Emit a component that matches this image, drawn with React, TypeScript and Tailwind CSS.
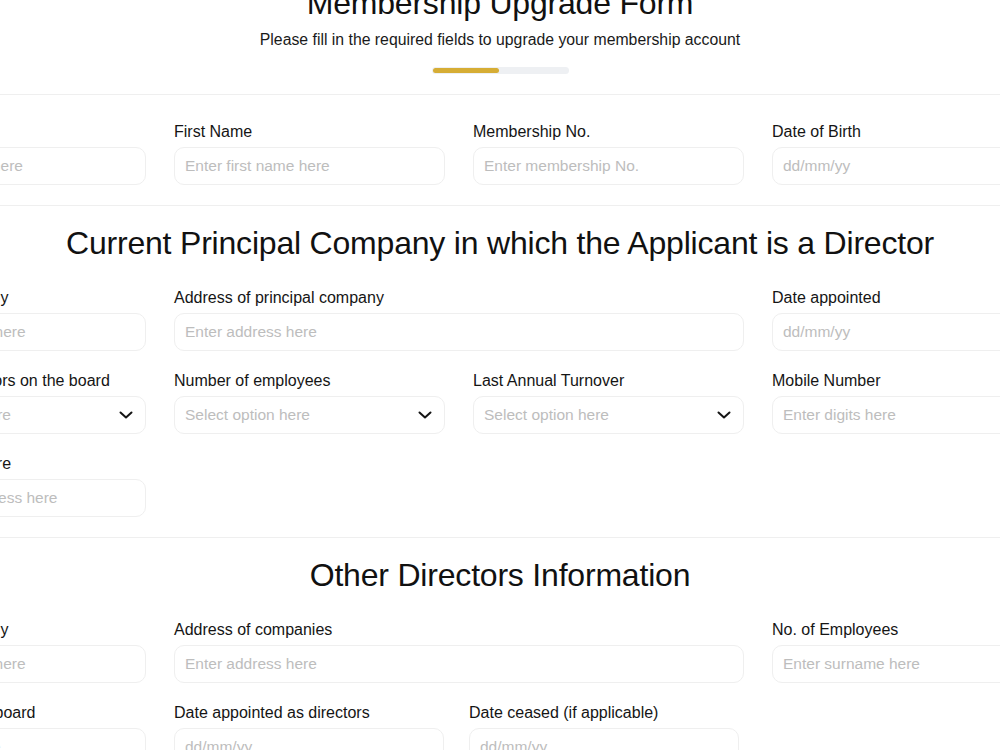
import React from 'react';

type Field = {
  label: string;
  placeholder: string;
  select?: boolean;
  span?: boolean;
};

function Chevron() {
  return (
    <svg width="14" height="8" viewBox="0 0 14 8" fill="none" className="shrink-0">
      <path d="M1.5 1.5 7 6.5l5.5-5" stroke="#141414" strokeWidth="2" strokeLinecap="round" strokeLinejoin="round" />
    </svg>
  );
}

function FormField({ label, placeholder, select, span }: Field) {
  return (
    <div className={span ? 'col-span-2 flex flex-col' : 'flex flex-col'}>
      <label className="text-[16px] leading-[20px] text-[#151515] whitespace-nowrap">{label}</label>
      <div className="mt-[5px] h-[38px] rounded-[10px] border border-[#efefef] bg-white pl-[10px] pr-[12px] flex items-center justify-between">
        <span className="text-[15.5px] text-[#bdbdbd] whitespace-nowrap">{placeholder}</span>
        {select && <Chevron />}
      </div>
    </div>
  );
}

function SectionTitle({ children }: { children: React.ReactNode }) {
  return <h2 className="text-center text-[32px] leading-[36px] text-[#111] tracking-[-0.2px]">{children}</h2>;
}

const personal: Field[] = [
  { label: 'Surname', placeholder: 'Enter surname here' },
  { label: 'First Name', placeholder: 'Enter first name here' },
  { label: 'Membership No.', placeholder: 'Enter membership No.' },
  { label: 'Date of Birth', placeholder: 'dd/mm/yy' },
];

const principal: Field[] = [
  { label: 'Name of Company', placeholder: 'Enter company here' },
  { label: 'Address of principal company', placeholder: 'Enter address here', span: true },
  { label: 'Date appointed', placeholder: 'dd/mm/yy' },
  { label: 'Number of directors on the board', placeholder: 'Select option here', select: true },
  { label: 'Number of employees', placeholder: 'Select option here', select: true },
  { label: 'Last Annual Turnover', placeholder: 'Select option here', select: true },
  { label: 'Mobile Number', placeholder: 'Enter digits here' },
  { label: 'Address elsewhere', placeholder: 'Enter other address here' },
];

const others: Field[] = [
  { label: 'Name of Company', placeholder: 'Enter company here' },
  { label: 'Address of companies', placeholder: 'Enter address here', span: true },
  { label: 'No. of Employees', placeholder: 'Enter surname here' },
];

export default function App() {
  return (
    <div className="min-h-screen w-full overflow-hidden bg-white font-['Liberation_Sans',Arial,sans-serif] text-[#111]">
      {/* Header */}
      <header className="-mt-[15px] flex flex-col items-center">
        <h1 className="text-[32px] leading-[36px] tracking-[-0.2px]">Membership Upgrade Form</h1>
        <p className="mt-[9px] text-[15.8px] leading-[20px] text-[#1a1a1a]">
          Please fill in the required fields to upgrade your membership account
        </p>
        <div className="mt-[17px] h-[7px] w-[137px] rounded-full bg-[#eef0f3] p-px">
          <div className="h-full w-[66px] rounded-full bg-[#d6ad35]" />
        </div>
      </header>

      <div className="mt-[20px] border-t border-[#efefef]" />

      {/* Personal details */}
      <section className="pt-[27px] pb-[20px]">
        <div className="ml-[-125px] grid w-[1168px] grid-cols-4 gap-x-[28px]">
          {personal.map((f) => (
            <FormField key={f.label} {...f} />
          ))}
        </div>
      </section>

      <div className="border-t border-[#efefef]" />

      {/* Principal company */}
      <section className="pt-[19px] pb-[20px]">
        <SectionTitle>Current Principal Company in which the Applicant is a Director</SectionTitle>
        <div className="mt-[27px] ml-[-125px] grid w-[1168px] grid-cols-4 gap-x-[28px] gap-y-[20px]">
          {principal.map((f) => (
            <FormField key={f.label} {...f} />
          ))}
        </div>
      </section>

      <div className="border-t border-[#efefef]" />

      {/* Other directors */}
      <section className="pt-[19px] pb-[20px]">
        <SectionTitle>Other Directors Information</SectionTitle>
        <div className="mt-[27px] ml-[-125px] grid w-[1168px] grid-cols-4 gap-x-[28px]">
          {others.map((f) => (
            <FormField key={f.label} {...f} />
          ))}
        </div>
        <div className="mt-[20px] ml-[-125px] flex">
          <div className="w-[271px]">
            <FormField label="Years served on board" placeholder="Enter years here" />
          </div>
          <div className="ml-[28px] w-[270px]">
            <FormField label="Date appointed as directors" placeholder="dd/mm/yy" />
          </div>
          <div className="ml-[25px] w-[270px]">
            <FormField label="Date ceased (if applicable)" placeholder="dd/mm/yy" />
          </div>
        </div>
      </section>
    </div>
  );
}
